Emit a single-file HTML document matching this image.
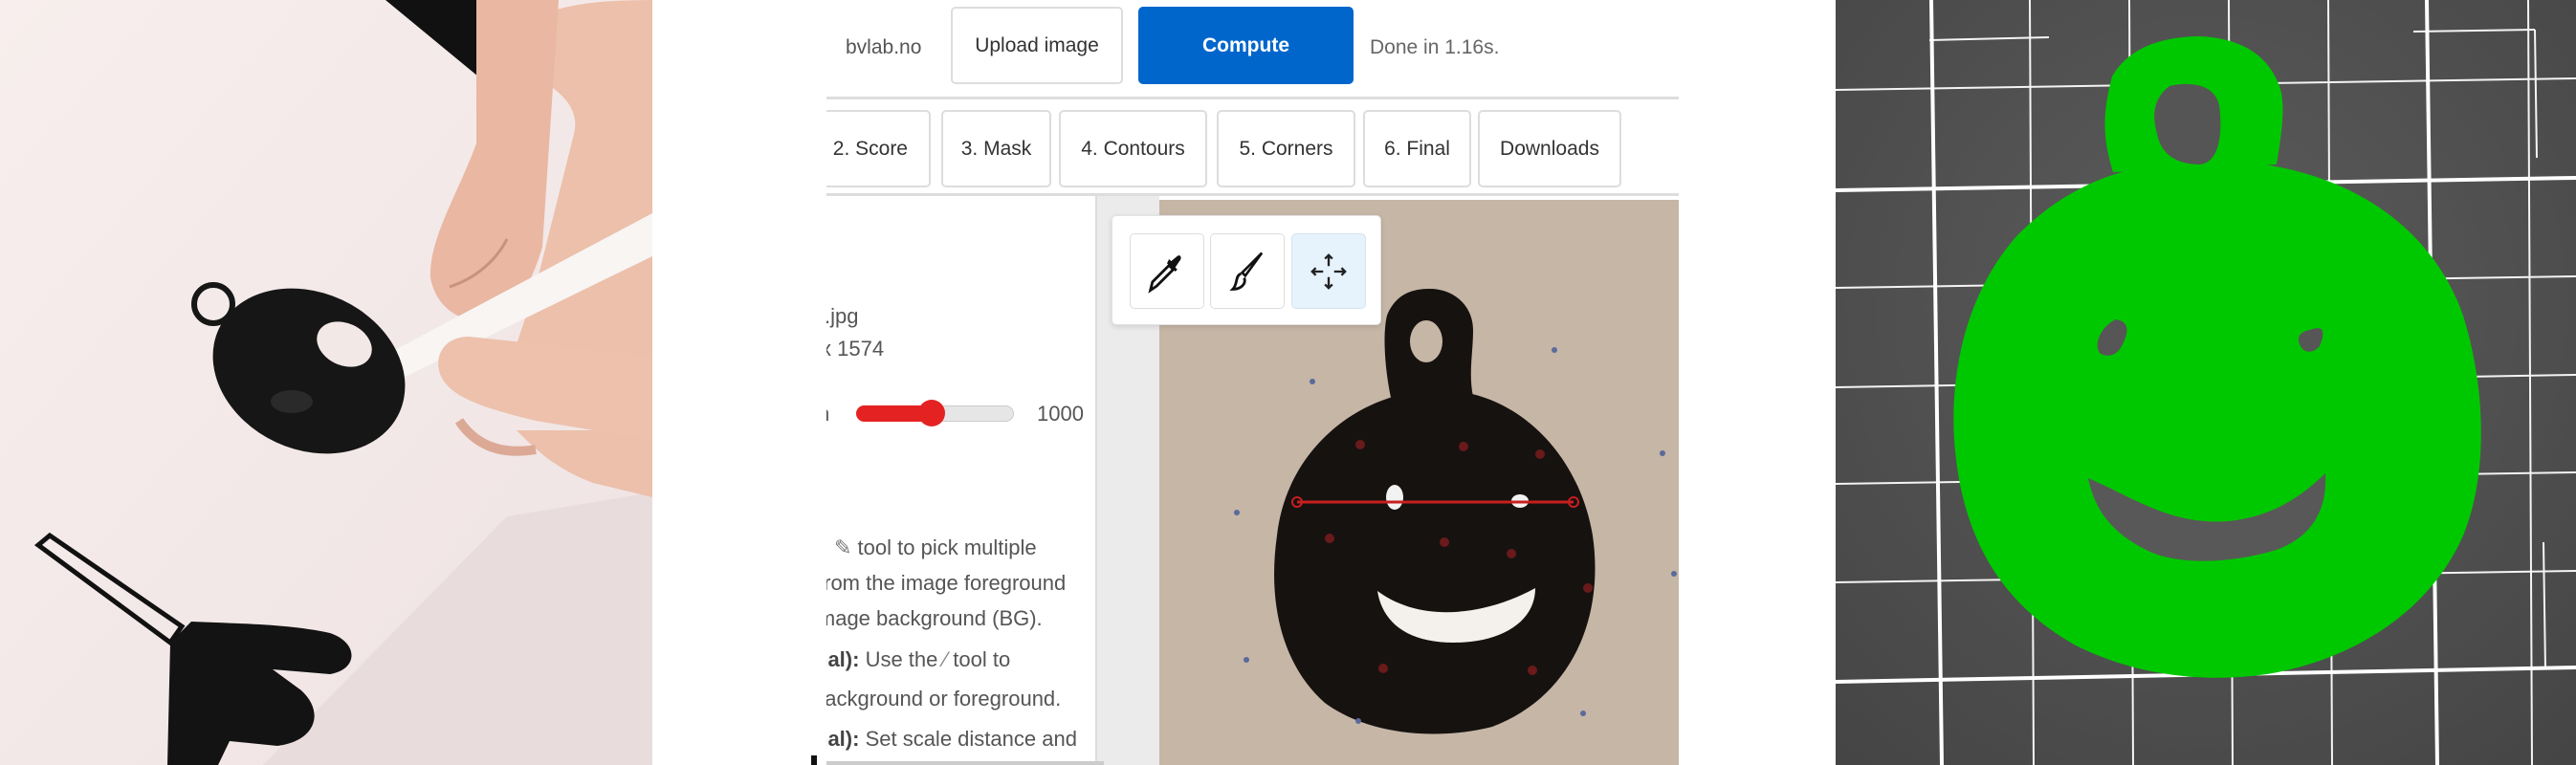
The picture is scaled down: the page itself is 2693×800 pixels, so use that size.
<!DOCTYPE html>
<html><head><meta charset="utf-8"><style>
*{margin:0;padding:0;box-sizing:border-box}
body{width:2693px;height:800px;position:relative;overflow:hidden;background:#fff;font-family:"Liberation Sans",sans-serif;color:#444}
.a{position:absolute}
.btn{position:absolute;border:2px solid #ddd;border-radius:5px;background:#fff;font-size:21px;color:#333;display:flex;align-items:center;justify-content:center}
.t{position:absolute;font-size:22px;color:#555;white-space:nowrap}
#clip{position:absolute;left:864px;top:0;width:900px;height:800px;overflow:hidden}
#clip>*{margin-left:-864px}
</style></head><body>
<!-- left photo -->
<svg class="a" style="left:0;top:0" width="682" height="800" viewBox="0 0 682 800">
<defs><linearGradient id="pg" x1="0" y1="0" x2="1" y2="1"><stop offset="0" stop-color="#f7eeed"/><stop offset="1" stop-color="#efe3e3"/></linearGradient></defs>
<rect width="682" height="800" fill="url(#pg)"/>
<polygon points="275,800 530,540 682,515 682,800" fill="#e8dcdc"/>
<polygon points="403,0 560,0 500,80" fill="#111"/>
<path d="M520,60 C540,10 600,0 682,0 L682,520 L620,505 C580,490 560,470 540,450 L680,450 L682,380 L540,360 L560,300 C575,240 590,180 600,140 C610,100 560,80 520,60 Z" fill="#ecc0ab"/>
<path d="M498,0 L584,0 L567,258 C555,300 535,330 515,335 C480,340 455,320 450,290 C448,250 480,200 498,150 Z" fill="#e9b7a2"/>
<path d="M470,300 C500,290 520,270 530,250" stroke="#c9927c" stroke-width="3" fill="none"/>
<polygon points="343,403 682,223 682,268 360,425" fill="#f8f5f3"/>
<path d="M682,372 L490,352 C460,352 450,380 465,400 C480,420 520,430 560,440 L682,460 Z" fill="#edc1ac"/>
<path d="M480,440 C500,470 530,475 560,470" stroke="#dba995" stroke-width="10" fill="none"/>
<ellipse cx="323" cy="388" rx="104" ry="82" transform="rotate(25 323 388)" fill="#161616"/>
<ellipse cx="360" cy="360" rx="30" ry="22" fill="#f2e8e6" transform="rotate(25 360 360)"/>
<ellipse cx="305" cy="420" rx="22" ry="12" fill="#2a2a2a"/>
<circle cx="223" cy="318" r="20" fill="none" stroke="#161616" stroke-width="6"/>
<path d="M40,570 L52,560 L190,655 L178,672 Z" fill="none" stroke="#111" stroke-width="5"/>
<path d="M178,672 L200,650 C240,652 300,652 345,662 C375,672 375,700 345,705 L285,700 L315,722 C340,745 330,775 290,780 L240,775 L228,800 L175,800 Z" fill="#131313"/>
</svg>
<!-- UI -->
<div id="clip">
<div class="t" style="left:884px;top:38px;font-size:21px;color:#555">bvlab.no</div>
<div class="btn" style="left:994px;top:7px;width:180px;height:81px">Upload image</div>
<div class="btn" style="left:1190px;top:7px;width:225px;height:81px;background:#0066cc;border-color:#0066cc;color:#fff;font-weight:bold">Compute</div>
<div class="t" style="left:1432px;top:38px;font-size:21px;color:#666">Done in 1.16s.</div>
<div class="a" style="left:864px;top:101px;width:891px;height:3px;background:#ddd"></div>
<div class="btn" style="left:820px;top:115px;width:153px;height:81px;justify-content:flex-end;padding-right:22px">2. Score</div>
<div class="btn" style="left:984px;top:115px;width:115px;height:81px">3. Mask</div>
<div class="btn" style="left:1107px;top:115px;width:155px;height:81px">4. Contours</div>
<div class="btn" style="left:1272px;top:115px;width:145px;height:81px">5. Corners</div>
<div class="btn" style="left:1425px;top:115px;width:113px;height:81px">6. Final</div>
<div class="btn" style="left:1545px;top:115px;width:150px;height:81px">Downloads</div>
<div class="a" style="left:864px;top:202px;width:891px;height:3px;background:#ddd"></div>
<div class="a" style="left:1145px;top:205px;width:67px;height:595px;background:#ebebeb;border-left:2px solid #ddd"></div>
<div class="a" style="left:864px;top:796px;width:290px;height:4px;background:#ccc"></div>
<div class="t" style="left:862px;top:318px">.jpg</div>
<div class="t" style="left:858px;top:352px">x 1574</div>
<div class="t" style="left:855px;top:420px">n</div>
<div class="a" style="left:895px;top:424px;width:165px;height:17px;border-radius:9px;background:#e6e6e6;border:1px solid #ccc"></div>
<div class="a" style="left:895px;top:424px;width:80px;height:17px;border-radius:9px;background:#e52222"></div>
<div class="a" style="left:960px;top:418px;width:28px;height:28px;border-radius:50%;background:#e52222"></div>
<div class="t" style="left:1084px;top:420px;color:#555">1000</div>
<div class="t" style="left:872px;top:560px"><span style="color:#777">✎</span> tool to pick multiple</div>
<div class="t" style="left:855px;top:597px">from the image foreground</div>
<div class="t" style="left:850px;top:634px">image background (BG).</div>
<div class="t" style="left:852px;top:677px"><b style="color:#444">nal):</b> Use the <span style="color:#888">⁄</span> tool to</div>
<div class="t" style="left:850px;top:718px">background or foreground.</div>
<div class="t" style="left:852px;top:760px"><b style="color:#444">nal):</b> Set scale distance and</div>
</div>
<div class="a" style="left:848px;top:790px;width:6px;height:10px;background:#111"></div>
<!-- middle image -->
<svg class="a" style="left:1212px;top:209px" width="543" height="591" viewBox="1212 209 543 591">
<rect x="1212" y="209" width="543" height="591" fill="#c6b6a6"/>
<path d="M1455,420 C1448,390 1445,350 1450,330 C1460,305 1480,302 1495,302 C1520,302 1540,320 1540,345 C1540,370 1535,390 1540,415 Z" fill="#161210"/>
<ellipse cx="1491" cy="357" rx="17" ry="22" fill="#c6b6a6"/>
<path d="M1500,408 C1580,405 1650,470 1665,560 C1678,650 1640,730 1560,760 C1500,775 1430,768 1385,735 C1340,695 1325,630 1335,560 C1345,470 1420,410 1500,408 Z" fill="#161210"/>
<ellipse cx="1458" cy="520" rx="9" ry="13" fill="#f2f2f2"/>
<ellipse cx="1589" cy="524" rx="9" ry="7" fill="#f2f2f2"/>
<path d="M1440,618 C1490,655 1560,640 1605,615 C1605,650 1570,672 1520,672 C1470,672 1445,650 1440,618 Z" fill="#f4f0ec"/>
<line x1="1356" y1="525" x2="1645" y2="525" stroke="#c81e1e" stroke-width="3"/>
<circle cx="1356" cy="525" r="5" fill="none" stroke="#c81e1e" stroke-width="2"/>
<circle cx="1645" cy="525" r="5" fill="none" stroke="#c81e1e" stroke-width="2"/>
<g fill="#6a1a1a"><circle cx="1422" cy="465" r="5"/><circle cx="1530" cy="467" r="5"/><circle cx="1610" cy="475" r="5"/><circle cx="1390" cy="563" r="5"/><circle cx="1510" cy="567" r="5"/><circle cx="1580" cy="579" r="5"/><circle cx="1660" cy="615" r="5"/><circle cx="1446" cy="699" r="5"/><circle cx="1602" cy="701" r="5"/></g>
<g fill="#5a6a9a"><circle cx="1372" cy="399" r="3"/><circle cx="1625" cy="366" r="3"/><circle cx="1738" cy="474" r="3"/><circle cx="1293" cy="536" r="3"/><circle cx="1750" cy="600" r="3"/><circle cx="1303" cy="690" r="3"/><circle cx="1420" cy="754" r="3"/><circle cx="1655" cy="746" r="3"/></g>
</svg>
<!-- toolbar -->
<div class="a" style="left:1162px;top:225px;width:282px;height:115px;background:#fff;border:1px solid #e2e2e2;border-radius:5px;box-shadow:0 2px 6px rgba(0,0,0,.12)"></div>
<div class="btn" style="left:1181px;top:244px;width:78px;height:79px;border-width:1px">
<svg width="52" height="52" viewBox="0 0 24 24"><path d="M4 21 L5 17 L13 9 L15 11 L7 19 Z" fill="none" stroke="#111" stroke-width="1.3"/><path d="M12 8 L16 12 L17 11 L16 10 L18 7 C19.5 5.5 18.5 3.5 17 4.5 L14 7 L13 6 Z" fill="#111"/></svg></div>
<div class="btn" style="left:1265px;top:244px;width:78px;height:79px;border-width:1px">
<svg width="52" height="52" viewBox="0 0 24 24"><path d="M19 3 L11 14 L9.5 12.5 Z" fill="none" stroke="#111" stroke-width="1.2"/><path d="M9 13 C6 14 7.5 18 5 20.5 C9 20.5 11.5 18 10.5 15" fill="none" stroke="#111" stroke-width="1.3"/></svg></div>
<div class="btn" style="left:1350px;top:244px;width:78px;height:79px;border-width:1px;background:#e6f2fc;border-color:#d4e4f0">
<svg width="46" height="46" viewBox="0 0 24 24" fill="none" stroke="#222" stroke-width="1.2"><path d="M12 3 V9 M12 15 V21 M3 12 H9 M15 12 H21 M10 5 L12 3 L14 5 M10 19 L12 21 L14 19 M5 10 L3 12 L5 14 M19 10 L21 12 L19 14"/></svg></div>
<!-- right render -->
<svg class="a" style="left:1919px;top:0" width="774" height="800" viewBox="1919 0 774 800">
<defs><radialGradient id="rg" cx="0.5" cy="0.4" r="0.8"><stop offset="0" stop-color="#5c5c5c"/><stop offset="1" stop-color="#444"/></radialGradient></defs>
<rect x="1919" y="0" width="774" height="800" fill="url(#rg)"/>
<g stroke="#f4f4f4" stroke-width="2">
<line x1="2122" y1="0" x2="2126" y2="800"/><line x1="2226" y1="0" x2="2230" y2="800"/><line x1="2330" y1="0" x2="2334" y2="800"/><line x1="2434" y1="0" x2="2438" y2="800"/><line x1="2643" y1="0" x2="2647" y2="800"/>
<line x1="1919" y1="94" x2="2693" y2="82"/><line x1="1919" y1="301" x2="2693" y2="289"/><line x1="1919" y1="405" x2="2693" y2="392"/><line x1="1919" y1="506" x2="2693" y2="494"/><line x1="1919" y1="609" x2="2693" y2="597"/>
<line x1="2017" y1="42" x2="2142" y2="39"/><line x1="2523" y1="33" x2="2650" y2="31"/><line x1="2650" y1="31" x2="2652" y2="165"/><line x1="2659" y1="567" x2="2661" y2="700"/>
</g>
<g stroke="#fff" stroke-width="4">
<line x1="2019" y1="0" x2="2030" y2="800"/><line x1="2537" y1="0" x2="2548" y2="800"/>
<line x1="1919" y1="199" x2="2693" y2="186"/><line x1="1919" y1="713" x2="2693" y2="698"/>
</g>
<path d="M2209,180 C2200,150 2196,125 2208,80 C2225,50 2260,38 2300,38 C2340,40 2370,55 2383,90 C2390,110 2385,140 2380,172 Z" fill="#00c800"/>
<path d="M2300,168 C2440,165 2540,230 2575,330 C2600,410 2600,500 2575,560 C2540,640 2460,690 2370,705 C2300,715 2230,705 2170,675 C2090,630 2050,560 2043,460 C2038,380 2060,300 2110,245 C2160,195 2220,170 2300,168 Z" fill="#00c800"/>
<path d="M2268,90 C2290,85 2315,88 2320,110 C2324,140 2320,170 2300,172 C2280,172 2260,165 2255,140 C2248,115 2255,100 2268,90 Z" fill="#555"/>
<path d="M2212,334 C2225,336 2226,345 2220,358 C2214,372 2205,374 2196,370 C2188,362 2195,342 2212,334 Z" fill="#565656"/>
<path d="M2415,345 C2428,340 2432,345 2425,362 C2418,370 2408,370 2404,360 C2400,350 2408,346 2415,345 Z" fill="#565656"/>
<path d="M2183,500 C2230,520 2270,550 2330,545 C2380,540 2410,515 2431,495 C2433,530 2420,560 2380,575 C2330,590 2280,590 2250,578 C2210,560 2190,535 2183,500 Z" fill="#585858"/>
</svg>
</body></html>
